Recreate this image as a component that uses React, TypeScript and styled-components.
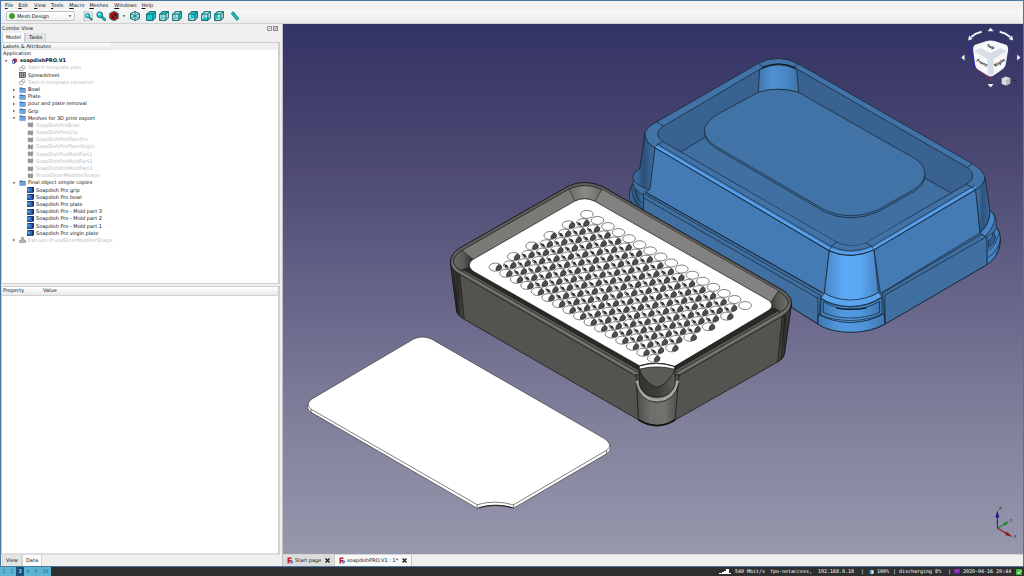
import React from "react";
import styled, { createGlobalStyle, css } from "styled-components";

const GlobalStyle = createGlobalStyle`
  *, *::before, *::after { box-sizing: border-box; }
  html, body, #root { height: 100%; margin: 0; }
  body {
    font: 5px/7px "DejaVu Sans", Verdana, sans-serif;
    color: #111;
    background: #efefef;
    overflow: hidden;
  }
  button, select, table { font: inherit; color: inherit; }
  button { border: 0; padding: 0; margin: 0; background: none; cursor: pointer; }
  ul { list-style: none; margin: 0; padding: 0; }
  svg { display: block; }
`;

const Desktop = styled.div`
  display: flex;
  flex-direction: column;
  height: 100vh;
`;

const AppWindow = styled.div`
  flex: 1;
  min-height: 0;
  display: flex;
  flex-direction: column;
  border: 1px solid #4a779f;
  background: #efefef;
`;

const MenuBar = styled.nav`
  display: flex;
  gap: 5px;
  height: 8px;
  padding-left: 4px;
  background: #f1f1f1;
`;

const MenuButton = styled.button`
  line-height: 8px;
  padding-right: 1px;
  margin-right: -1px;
  &:nth-child(even) { margin-right: 0; }
  &::first-letter { text-decoration: underline; }
`;

const ToolBar = styled.div`
  display: flex;
  align-items: center;
  gap: 3px;
  height: 15px;
  padding-left: 5px;
  background: linear-gradient(#f7f7f7, #ededed);
  border-bottom: 1px solid #d0d0d0;
`;

const WorkbenchPicker = styled.label`
  display: flex;
  align-items: center;
  gap: 2px;
  width: 69px;
  height: 10px;
  margin-right: 5px;
  padding: 0 2px;
  border: 1px solid #c4c4c4;
  border-radius: 2px;
  background: linear-gradient(#ffffff, #f0f0f0);
`;

const WorkbenchSelect = styled.select`
  flex: 1;
  min-width: 0;
  height: 8px;
  padding: 0;
  border: 0;
  appearance: none;
  background: none;
  line-height: 8px;
`;

const ToolButton = styled.button<{ $gap?: number }>`
  width: 10px;
  height: 10px;
  margin-left: ${(p) => p.$gap ?? 0}px;
`;

const ArrowButton = styled.button`
  width: 4px;
  height: 10px;
  display: grid;
  place-items: center;
`;

const Workspace = styled.div`
  flex: 1;
  min-height: 0;
  display: flex;
`;

const Sidebar = styled.aside`
  flex: 0 0 281px;
  display: flex;
  flex-direction: column;
  padding-right: 2px;
`;

const DockTitle = styled.header`
  display: flex;
  align-items: center;
  height: 9px;
  padding: 0 1px;
  line-height: 9px;
`;

const DockName = styled.span`
  flex: 1;
`;

const DockButton = styled.button`
  width: 6px;
  height: 6px;
`;

const TabStrip = styled.div<{ $bottom?: boolean }>`
  display: flex;
  height: ${(p) => (p.$bottom ? 11 : 9)}px;
  padding-left: 1px;
`;

const PanelTab = styled.button<{ $active?: boolean }>`
  padding: 0 3px;
  min-width: 20px;
  line-height: 9px;
  border: 1px solid #d2d2d2;
  border-width: 0 1px;
  background: ${(p) => (p.$active ? "#fcfcfc" : "#e4e4e4")};
`;

const TreePanel = styled.section`
  flex: 0 0 auto;
  height: 242px;
  border: 1px solid #cfcfcf;
  border-right-width: 2px;
  background: #fff;
`;

const TreeHeader = styled.div`
  height: 7px;
  padding-right: 168px;
  line-height: 7px;
  background: #efefef;
`;

const TreeHeading = styled.div`
  padding-left: 1px;
  background: linear-gradient(#fff, #e6e6e6);
`;

const Tree = styled.ul`
  display: grid;
  grid-auto-rows: 1fr;
  height: 194px;
`;

const TreeRow = styled.li<{ $depth: number; $dim?: boolean; $bold?: boolean }>`
  display: flex;
  align-items: center;
  min-height: 0;
  gap: 2px;
  padding-left: ${(p) => [1, 2, 10, 18][p.$depth]}px;
  white-space: nowrap;
  color: ${(p) => (p.$dim ? "#bcbcbc" : "#111")};
  ${(p) => p.$bold && css`font-weight: bold;`}
`;

const IconSlot = styled.span<{ $w: number }>`
  display: grid;
  place-items: center;
  width: ${(p) => p.$w}px;
`;

const Splitter = styled.div`
  height: 2px;
`;

const PropertyPanel = styled.section`
  flex: 1;
  min-height: 0;
  border: 1px solid #cfcfcf;
  border-right-width: 2px;
  border-bottom: 2px solid #dcdcdc;
  background: #fff;
`;

const PropertyTable = styled.table`
  width: 100%;
  border-collapse: collapse;
  table-layout: fixed;
  background: linear-gradient(#fff, #e9e9e9);
  border-bottom: 1px solid #d2d2d2;
`;

const PropertyHead = styled.th<{ $w?: number }>`
  width: ${(p) => (p.$w ? p.$w + "px" : "auto")};
  height: 8px;
  padding: 0 1px;
  line-height: 7px;
  font-weight: normal;
  text-align: left;
`;

const ViewArea = styled.main`
  flex: 1;
  min-width: 0;
  display: flex;
  flex-direction: column;
  border-left: 1px solid #bfbfc6;
`;

const Viewport = styled.div`
  flex: 1;
  min-height: 0;
  background: linear-gradient(#333366 0%, #3e3d6a 12%, #4d4973 27%, #67668a 52%, #82819b 76%, #9797ad 100%);
`;

const Scene = styled.svg`
  width: 100%;
  height: 100%;
`;

const DocumentTabs = styled.div`
  display: flex;
  height: 12px;
  border-top: 1px solid #d6d6d6;
`;

const DocumentTab = styled.div<{ $active?: boolean; $w: number }>`
  display: flex;
  align-items: center;
  gap: 2px;
  width: ${(p) => p.$w}px;
  padding: 0 4px;
  border-right: 1px solid #c8c8c8;
  background: ${(p) => (p.$active ? "#f8f8f8" : "#dcdcdc")};
`;

const DocumentName = styled.button`
  flex: 1;
  text-align: left;
  white-space: nowrap;
`;

const CloseButton = styled.button`
  width: 5px;
  height: 5px;
`;

const StatusBar = styled.footer`
  display: flex;
  justify-content: space-between;
  height: 9px;
  padding-right: 1px;
  background: #2f2f2f;
  color: #fff;
  font-family: "DejaVu Sans Mono", "Liberation Mono", monospace;
  line-height: 9px;
`;

const Desktops = styled.div`
  display: flex;
  background: #5cb3d3;
  color: #25718f;
`;

const DesktopButton = styled.button<{ $active?: boolean; $wide?: boolean }>`
  width: ${(p) => (p.$wide ? 11 : 8)}px;
  ${(p) => p.$active && css`background: #1c4f7c; color: #fff;`}
`;

const StatusItems = styled.div`
  display: flex;
  align-items: center;
`;

const StatusItem = styled.span<{ $w: number }>`
  width: ${(p) => p.$w}px;
  white-space: nowrap;
`;

/* ---------- small icons ---------- */

const TreeArrow = ({ open }: { open: boolean }) => (
  <svg width="4" height="4" viewBox="0 0 4 4">
    <path d={open ? "M.5 1.200h3L2 3z" : "M1.200 .5v3L3 2z"} fill="#555" />
  </svg>
);

type Kind = "doc" | "sketch" | "sheet" | "folder" | "mesh" | "solid" | "extrude";

const TreeIcon = ({ kind }: { kind: Kind }) => (
  <svg width="7" height="6" viewBox="0 0 14 12">
    {kind === "doc" && (
      <>
        <path d="M2 4l4-3 5 1v6l-5 4-4-2z" fill="#27489b" />
        <path d="M7 1l5 1v5l-5 1z" fill="#d8222a" />
        <path d="M3 5l3 1v4l-3-1z" fill="#cfdcf5" />
      </>
    )}
    {kind === "sketch" && (
      <path d="M1 5h7v6H1zM5 5V2l4-1 3 2v4H8" fill="#f8f8f8" stroke="#a5a5a5" strokeWidth="1.4" />
    )}
    {kind === "sheet" && (
      <>
        <rect x="1" y="1" width="12" height="10" fill="#c8c8c8" stroke="#333" strokeWidth="1.3" />
        <path d="M1 4h12M1 7.5h12M5 1v10M9 1v10" stroke="#444" strokeWidth="1.1" />
      </>
    )}
    {kind === "folder" && (
      <>
        <path d="M1 1h5l1 1h6v9H1z" fill="#4474ae" />
        <path d="M2 4h11v7H2z" fill="#6fa3dc" />
      </>
    )}
    {kind === "mesh" && (
      <path d="M2 3l3-2 2 2 4-2 1 5-2 5-3-3-4 2z M4 2l1 8M8 3l1 7" fill="#a0a0a0" stroke="#7b7b7b" strokeWidth="1" />
    )}
    {kind === "solid" && (
      <>
        <path d="M0 1l3-1h11v10l-3 2H0z" fill="#143a78" />
        <path d="M0 2h10v9H0z" fill="#2e69b8" />
        <path d="M1 3h5v4H1z" fill="#5e9be0" />
      </>
    )}
    {kind === "extrude" && (
      <path d="M5 1h4v5h4v5H1V7h4z" fill="#b5b5b5" stroke="#838383" strokeWidth="1.2" />
    )}
  </svg>
);

const INK = "#0c5a60";
const TEAL = "#19d0d6";

const Magnifier = () => (
  <>
    <path d="M9 9l5 5" stroke={INK} strokeWidth="4" strokeLinecap="round" />
    <path d="M9 9l5 5" stroke={TEAL} strokeWidth="2" strokeLinecap="round" />
    <circle cx="6" cy="6" r="4.6" fill={TEAL} stroke={INK} strokeWidth="1.4" />
    <circle cx="5" cy="5" r="1.8" fill="#b7f6f7" />
  </>
);

const CubeIcon = ({ face }: { face: string }) => (
  <>
    <path d="M1 5l4-4h10v10l-4 4H1z" fill="#b4ecee" />
    {face === "front" && <path d="M1 5l4-4h10v10l-4 4H1z" fill={TEAL} />}
    {face === "top" && <path d="M1 5l4-4h10l-4 4z" fill={TEAL} />}
    {face === "right" && <path d="M11 5l4-4v10l-4 4z" fill={TEAL} />}
    {face === "rear" && <path d="M5 1h10v10H5z" fill={TEAL} />}
    {face === "bottom" && <path d="M1 15l4-4h10l-4 4z" fill={TEAL} />}
    {face === "left" && <path d="M1 5l4-4v10l-4 4z" fill={TEAL} />}
    <path d="M1 5l4-4h10v10l-4 4H1zM1 5h10v10M11 5l4-4" fill="none" stroke={INK} strokeWidth="1.5" strokeLinejoin="round" />
    {face !== "front" && <path d="M5 1v10h10M5 11l-4 4" fill="none" stroke="#1b9ba0" strokeWidth="1.2" />}
  </>
);

const ToolIcon = ({ name }: { name: string }) => (
  <svg width="10" height="10" viewBox="0 0 16 16">
    {name === "fit" && (
      <>
        <path d="M2 0h10l3 3v13H2z" fill="#e6ecec" stroke="#8f9b9b" />
        <g transform="translate(3 3) scale(.75)"><Magnifier /></g>
      </>
    )}
    {name === "zoom" && <Magnifier />}
    {name === "style" && (
      <>
        <path d="M8 0l7 4v8l-7 4-7-4V4z" fill="#167a7c" stroke={INK} />
        <circle cx="8" cy="8" r="5.4" fill="#3a1210" stroke="#c9141b" strokeWidth="2" />
        <path d="M4 4l8 8" stroke="#c9141b" strokeWidth="2" />
      </>
    )}
    {name === "iso" && (
      <>
        <path d="M8 1l7 3v8l-7 3-7-3V4z" fill="#b4ecee" stroke={INK} strokeWidth="1.5" />
        <path d="M1 4l7 4 7-4M8 1v14M1 12l7-4 7 4" fill="none" stroke="#167d82" strokeWidth="1.5" />
      </>
    )}
    {name === "measure" && (
      <>
        <path d="M2 4l3-3 9 11-3 3z" fill={TEAL} stroke="#0b7378" strokeWidth="1.4" />
        <path d="M6 3l-1 2M8 6L7 7M10 8L9 9M12 10l-1 2" stroke="#0b7378" strokeWidth="1" />
      </>
    )}
    {["front", "top", "right", "rear", "bottom", "left"].includes(name) && <CubeIcon face={name} />}
  </svg>
);

const DocIcon = () => (
  <svg width="6" height="7" viewBox="0 0 12 14">
    <path d="M1 1h8v3H4v2h4v3H4v4H1z" fill="#d2161e" />
    <circle cx="8.500" cy="9.500" r="2.500" fill="#9db9ea" stroke="#2c4f9e" strokeWidth="1.800" />
  </svg>
);

const Cross = () => (
  <svg width="5" height="5" viewBox="0 0 10 10">
    <path d="M1 1l8 8M9 1L1 9" stroke="#111" strokeWidth="2.400" />
  </svg>
);

/* ---------- 3D scene ---------- */

const EDGE = "#16202b";

const BlueMold = () => (
  <g stroke={EDGE} strokeWidth=".7" strokeLinejoin="round" fill="none">
    {/* skirt and silhouette */}
    <path d="M645 133 L640 168 Q633 174 633 183 Q629 188 629.500 196 Q631 204 640 211 L817 323.300 Q828 331 850 331.700 Q874 331 885 323.300 L986.700 264 Q999 256 1000 240 Q1000 232 995.500 226 Q997 214 989 210 L984 177 Z" fill="#4070a2" />
    <path d="M633.500 184 Q634 190 644 195 L644 212 Q630 205 629.500 196 Q629.500 188 633.500 184 Z" fill="url(#blueCorner)" />
    <path d="M632 187 Q631 200 643 208 M635 189 Q636 199 643 203" />
    {/* left round corner and two front faces */}
    <path d="M645 133 Q645 143 655 147 L650.500 190 Q633 184 633 177 Q634 171 640 168 Z" fill="url(#blueCorner)" />
    <path d="M655 147 L829 250 L824 293 L645 191.500 L650 189 Z" fill="#457bb4" />
    <path d="M873.500 249 L975 188.500 L979.500 232.500 L880 293 Z" fill="#457bb4" />
    <path d="M975 188.500 Q984 184 984.300 177 L989.500 212 Q988 225 979.500 232.500 Z" fill="url(#blueCornerR)" />
    <path d="M989.500 210 Q996 216 993.500 222 Q990 231 984 236 L979.500 232.500 Q989 224 989.500 212 Z" fill="#4a87c8" />
    {/* lower skirt */}
    <path d="M643.500 193 L820.500 295 L818 323.500 L643.500 214 Z" fill="#4070a2" />
    <path d="M645 191.500 L821 292 M643.500 197.500 L818 298" />
    <path d="M882 292.500 L981 234 L986.500 237 L986.500 264 L885 323.300 Z" fill="#4070a2" />
    <path d="M884.500 294.500 L985.500 236.500 M884.500 294.500 V323.300" />
    <path d="M986.500 237 Q994 232 996 228 Q1000 232 999.500 242 Q997 258 986.500 264 Z" fill="#4682c2" />
    <path d="M987.500 250 Q995 246 998 234 M987.500 257 Q997 251 999.500 240" />
    <path d="M988 240 Q992 237 993 232 L995 238 Q993 244 988 247 Z" fill="#2f5f92" />
    {/* front round corner */}
    <path d="M829 250 Q850 260 873.500 249 L878 292 Q866 300 850 300 Q834 300 824 292.500 Z" fill="url(#blueFront)" />
    <path d="M824 292.500 Q834 299 850 299.500 Q867 299 878 292 L881.500 296 Q869 305.500 850 306 Q832 305.500 820.500 297.500 Z" fill="#5aa5f0" />
    <path d="M820.500 298 Q832 306 850 306.500 Q869 306 881.500 297 L881.500 314 Q868 322 850 322 Q831 322 820.500 315 Z" fill="url(#blueFront2)" />
    <path d="M823 301 Q835 308.500 850 308.500 Q867 308.500 879 301 V312 Q866 317.500 850 317.500 Q835 317.500 823 312 Z" fill="url(#blueFront2)" />
    <path d="M836 307.600 Q850 310 866 307.600" strokeWidth="1.400" />
    <path d="M818 313.500 Q833 322 850 322 Q870 321.500 883.500 313 L884.500 323.300 Q870 331.700 850 331.700 Q828 331 817.500 323.500 Z" fill="url(#blueFront2)" />
    <path d="M819 314.500 Q832 319.500 850 320 Q870 319.500 883 313 M817.500 296 V323.500" />
    {/* rim */}
    <path d="M656.700 121.700 L758.300 63.300 Q778.300 53 798.300 64 L971.700 163.300 Q984 171 984.300 178 Q983 185 975 189.500 L873.500 249.500 Q850 260 829 250.500 L655 147.500 Q645 142 645 133.500 Q646 127 656.700 121.700 Z" fill="#4173a8" />
    <path d="M655 145.500 L829 248 Q850 258 873.500 247.500 L975 187" stroke="#56a2f0" strokeWidth="2.400" />
    <path d="M655 147.500 L829 250.500 Q850 260 873.500 249.500 L975 189.500 M657 143.500 L830 245.500 Q850 255 872 245.500 L974 185" strokeWidth=".5" />
    {/* cavity */}
    <path d="M663.300 126 L760 69 Q778.300 59.500 797 69 L966.700 167.300 Q972 171 972 175.500 Q971.500 181 965.700 184 L865 242.300 Q850 248 836.700 241.700 L663.300 141.500 Q657.500 138 657.500 133.500 Q658 129 663.300 126 Z" fill="#396290" />
    <path d="M681.700 151.500 L705 137 L721 112.500 L758.300 92 Q778.300 86 798.300 92.300 L913.300 157.700 Q925 165 924.500 178 L950 192.300 L865 242.300 Q850 248 836.700 241.700 Z" fill="#4070a2" stroke="none" />
    <path d="M759.500 69.500 Q778 60 796.500 69.500 L798.500 92.500 Q778.300 86 758 92.500 Z" fill="url(#blueBack)" />
    <path d="M681.700 151 L705 137 M924.500 178 L950 192.300" />
    <path d="M720 112.700 L758.300 92 Q778.300 86 798.300 92.300 L913.300 157.700 Q924 164 924.500 173.300 Q924 183 913.300 189.300 L876.700 210 Q850 221 825 210 L716.700 146.700 Q704 139 704.300 130 Q705 121 720 112.700 Z" fill="#4173a6" />
    <path d="M704.500 132 Q704.500 141 716.700 148.700 L825 212 Q850 223 876.700 212 L913.300 191.300 Q924 185 924.500 175" />
    {/* seams across the rim */}
    <path d="M656.700 121.700 L663.300 126 M758.300 63.300 L763 67 M798.300 64 L794 67 M971.700 163.300 L966.700 167.300 M965.700 184 L975 189 M865 242.300 Q871 244 873.500 249 M836.700 241.700 Q831 244 829 250 M663.300 141.500 Q657 143 655 147.500" />
    <path d="M762 67.500 Q778 60.500 795 67.500" strokeWidth="1.400" />
  </g>
);

const holes = (() => {
  const list: { x: number; y: number; blob: boolean; wedge: boolean }[] = [];
  for (let r = 0; r <= 10; r++) {
    const odd = r % 2 === 1;
    const count = odd ? 15 : 16;
    for (let c = 0; c < count; c++) {
      const j = c + (odd ? 0.5 : 0);
      list.push({
        x: 587 - 9.13 * r + 10.53 * j,
        y: 214 + 5.27 * r + 6.07 * j,
        blob: r > 0,
        wedge: r > 0 && r < 10 && (odd || c > 0) && c < 15,
      });
    }
  }
  return list;
})();

const Bowl = () => (
  <g stroke="#131313" strokeWidth=".7" strokeLinejoin="round" fill="none">
    <path d="M460 247.700 L568.300 186 Q585 178 603.300 186.700 L780 288.300 Q791 294 791.300 303 L784 354 Q783 358 778 361 L675 419.300 Q656.700 430.500 638.300 419 L465 319 Q457 314 457 310 L450.700 262 Q451 253 460 247.700 Z" fill="#54534f" />
    <path d="M450.700 262 Q451 269 460 274 L464.500 318.500 Q457 314 457 310 Z" fill="url(#greyLeft)" />
    <path d="M791.300 303 Q790 311 782 315.700 L777.500 361 Q783 358 784 354 Z" fill="url(#greyRight)" />
    <path d="M453 268 L459 314 M785 313 L781 358" strokeWidth=".5" />
    <path d="M460 247.700 L568.300 186 Q585 178 603.300 186.700 L780 288.300 Q791 294 791.300 303 Q790 311 782 315.700 L677 376 L637 376 L460 274 Q451 269 450.700 262 Q451 253 460 247.700 Z" fill="#5f5e5b" />
    <path d="M453 262 Q453 268 461 272 L637 373.500 M677 373.500 L781 313.500 Q788 309 789 303" stroke="#7c7b78" strokeWidth="1.300" />
    <path d="M462.500 249.800 L569 188.800 Q585 181.500 602 189.300 L778 290.500 Q788 297 788 303 Q787 308 780 311.500 L677 371 L637 371 L461.500 270 Q454 266 454 261.500 Q454 255 462.500 249.800 Z" fill="#7b7a77" />
    <path d="M602 189.300 L778 290.500 L770 300 L595 201 Z" fill="#838280" stroke="none" />
    <path d="M569 188.800 Q585 181.500 602 189.300 L595 201 Q585 196 575 200.700 Z" fill="url(#greyBack)" strokeWidth=".5" />
    <path d="M462.500 249.800 L473.500 259 Q466 264 472 272 L461.500 270 Q454 266 454 261.500 Q454 255 462.500 249.800 Z" fill="url(#greyLeft2)" strokeWidth=".5" />
    <path d="M778 290.500 Q788 297 788 303 Q787 308 780 311.500 L768 311 Q774 306 770.700 301.700 Z" fill="url(#greyRight2)" strokeWidth=".5" />
    <path d="M462 269 L470 266 L640 362 H674 L771 306 L780 310 L677 369.500 H637 Z" fill="#2a2926" stroke="none" />
    <path d="M464 270.500 L638 370 M676 370 L778 311.500" stroke="#5e5d5a" strokeWidth="1" />
    {/* perforated plate */}
    <path d="M473.300 259 L575 200.700 Q585 196 595 201 L768 299.500 Q775 304.500 769 309.500 L674.500 365.700 Q656.700 359.500 639.300 365 L473 270.500 Q466 264.500 473.300 259 Z" fill="#fff" />
    <g stroke="#2d2d2d" strokeWidth=".6">
      {holes.map((h, i) => (
        <g key={i}>
          <ellipse cx={h.x} cy={h.y} rx="6.300" ry="4" fill="#fff" />
          {h.blob && (
            <path
              d={`M${h.x + 0.4} ${h.y + 3} Q${h.x + 0.2} ${h.y - 0.8} ${h.x + 3.8} ${h.y - 2.8} Q${h.x + 6.8} ${h.y - 1} ${h.x + 6} ${h.y + 1.8} Q${h.x + 4} ${h.y + 4} ${h.x + 0.4} ${h.y + 3} Z`}
              fill="#4d4d4c"
            />
          )}
          {h.wedge && (
            <path
              d={`M${h.x - 6} ${h.y - 0.8} L${h.x - 2.8} ${h.y + 0.2} L${h.x - 1} ${h.y + 3.2} L${h.x - 4.4} ${h.y + 2.4} Z`}
              fill="#2a2a2a"
              stroke="none"
            />
          )}
        </g>
      ))}
    </g>
    {/* pouring spout */}
    <path d="M636 374 L638.500 419 Q656.700 430.500 675 419.300 L679 374 Z" fill="url(#spout)" />
    <path d="M638.500 419 Q656.700 430.500 675 419.300" strokeWidth="1.600" />
    <path d="M637 380 Q640 399 656.700 399.500 Q674 399 677.500 380" stroke="#a6a497" strokeWidth="3.200" />
    <path d="M635.700 382 Q640 401 656.700 401.500 Q675 401 679 382" />
    <path d="M639.300 367 V384 Q643 396 657 396.500 Q671 396 675 384 V367 Q656.700 362 639.300 367 Z" fill="url(#spoutInner)" />
    <path d="M639.500 368 Q656.700 364 675 368 L673 373 Q664 386 657 386.500 Q650 386 641 373 Z" fill="#5b5a56" />
    <path d="M639.300 365.500 Q656.700 360 674.500 366 V368.500 Q656.700 364 639.300 368.500 Z" fill="#fff" />
  </g>
);

const BlankPlate = () => (
  <g stroke="#2a2a2a" strokeWidth=".6" strokeLinejoin="round">
    <path d="M308.300 403.500 V407 Q308.500 409.500 311.700 411.500 L477.500 507.300 H479 Q495.700 502 513.700 507.300 L606.700 453 Q610.500 450.500 610.300 447 V444 Z" fill="#fff" />
    <path d="M479 506.700 Q495.700 501.800 513 506.700" fill="none" stroke="#111" strokeWidth=".9" />
    <path d="M313.500 397.700 L414 338.500 Q422.700 334.500 431.700 338.300 L604 437.500 Q614 444 606.700 449.500 L513.700 504 Q495.700 498.500 477.500 503.800 L311.700 408.500 Q305 403 313.500 397.700 Z" fill="#fff" />
    <path d="M311.700 408.500 v3 M606.700 449.500 v3.500 M477.500 503.800 v3.500 M513.700 504 v3.300" />
  </g>
);

const NavigationCube = () => (
  <g>
    <g fill="#eef3f8">
      <path d="M987 31.200 L990 27.800 L993 31.200 Z M987 84 H993 L990 87.500 Z M964 54.500 V60.500 L960.700 57.500 Z M1016.500 54.500 V60.500 L1019.800 57.500 Z" />
      <path d="M967.500 40.500 L968.500 35.500 L972 39 Z M1012.500 40.500 L1011.500 35.500 L1008 39 Z" />
    </g>
    <path d="M970.500 37 Q975 33 981 31.800 M1009.500 37 Q1005 33 999 31.800" fill="none" stroke="#eef3f8" strokeWidth="2" />
    <path d="M975 67 L992 81" fill="none" stroke="#c01f35" strokeWidth=".8" />
    <path d="M970.500 43 V52 L975 67" fill="none" stroke="#2323d8" strokeWidth="1" />
    <path d="M974 45 L986 41 Q990 40 994 41 L1006 45 Q1008 47 1007.500 50 L1005 65 Q1004 68 1001 70 L993 75.500 Q990 77.500 987 75.500 L978 70 Q975 68 974.500 65 L972.500 50 Q972 47 974 45 Z" fill="#f4f5f7" />
    <path d="M974 51 L983 47 L990 52 L997 47 L1006 51 L993 59 V75 H987 V59 Z" fill="#ccd6e2" opacity=".75" />
    <path d="M978 47 L990 41.500 L1002 47 L990 53 Z M975 54 L986 60 V72 L977 67 Z M1005 54 L994 60 V72 L1003 67 Z" fill="#fafafa" />
    <g fill="#2b2b2b" fontFamily="DejaVu Sans, sans-serif" fontSize="4" fontWeight="bold" textAnchor="middle">
      <text x="990" y="48" transform="rotate(20 990 47)">Top</text>
      <text x="981" y="64" transform="rotate(30 981 63)">Front</text>
      <text x="999" y="64" transform="rotate(-30 999 63)">Right</text>
    </g>
    <path d="M1001 78.500 L1005 76.500 L1009.500 78 V83.500 L1005.500 85.500 L1001 84 Z" fill="#dcdcdc" />
    <path d="M1005.500 80 L1009.500 78 V83.500 L1005.500 85.500 Z" fill="#b9b9b9" />
    <path d="M1013 80.500 h3" stroke="#1c2244" strokeWidth="1.200" />
  </g>
);

const AxisCross = () => (
  <g>
    <path d="M996.700 527.300 V514" stroke="#1b1b8e" strokeWidth="1" />
    <path d="M994.700 516.500 L996.700 509.500 L998.700 516.500 Z" fill="#1b1b8e" />
    <path d="M996.700 527.300 L1004 523" stroke="#1c7a1f" strokeWidth="1" />
    <path d="M1002.500 522 L1008.500 520 L1004.500 525 Z" fill="#1c8a1f" />
    <path d="M996.700 527.300 L1006 532.500" stroke="#8e1b1b" strokeWidth="1" />
    <path d="M1006 530.500 L1012 536 L1004.500 534 Z" fill="#8e1b1b" />
    <g fill="#20202a" fontFamily="DejaVu Sans, sans-serif" fontSize="4">
      <text x="998" y="509">Z</text>
      <text x="1009" y="521">Y</text>
      <text x="1013" y="537">X</text>
    </g>
  </g>
);

const Stops = ({ id, colors }: { id: string; colors: string[] }) => (
  <linearGradient id={id}>
    {colors.map((c, i) => (
      <stop key={i} offset={i / (colors.length - 1)} stopColor={c} />
    ))}
  </linearGradient>
);

const Model = () => (
  <Scene viewBox="283 24 740 529" preserveAspectRatio="xMidYMid slice" role="img" aria-label="Soap dish model">
    <defs>
      <Stops id="blueCorner" colors={["#3f73a8", "#2c5078", "#3f70a4"]} />
      <Stops id="blueCornerR" colors={["#4378b0", "#2d547f", "#3c6b9d"]} />
      <Stops id="blueFront" colors={["#4a86c6", "#5ba8f4", "#5ba8f4", "#4882c0"]} />
      <Stops id="blueFront2" colors={["#4178b2", "#5299e0", "#4f95da", "#4178b2"]} />
      <Stops id="blueBack" colors={["#3f76ae", "#4e90d2", "#4a89c8", "#3d70a5"]} />
      <Stops id="greyLeft" colors={["#454441", "#2a2927", "#4c4b48"]} />
      <Stops id="greyRight" colors={["#4c4b48", "#2f2e2c", "#454441"]} />
      <Stops id="greyLeft2" colors={["#6c6b68", "#5b5a57", "#2c2b29"]} />
      <Stops id="greyRight2" colors={["#353432", "#5a5956", "#6f6e6b"]} />
      <Stops id="greyBack" colors={["#6b6a67", "#8b8a87", "#6b6a67"]} />
      <Stops id="spout" colors={["#4b4a47", "#6f6e6a", "#73726e", "#4b4a47"]} />
      <Stops id="spoutInner" colors={["#33322f", "#3e3d3a", "#5d5c59"]} />
    </defs>
    <BlueMold />
    <Bowl />
    <BlankPlate />
    <NavigationCube />
    <AxisCross />
  </Scene>
);

/* ---------- data ---------- */

type Node = { name: string; depth: number; kind?: Kind; open?: boolean; dim?: boolean; bold?: boolean };

const nodes: Node[] = [
  { name: "Application", depth: 0 },
  { name: "soapdishPRO.V1", depth: 1, kind: "doc", open: true, bold: true },
  { name: "Sketch template plan", depth: 2, kind: "sketch", dim: true },
  { name: "Spreadsheet", depth: 2, kind: "sheet" },
  { name: "Sketch template elevation", depth: 2, kind: "sketch", dim: true },
  ...["Bowl", "Plate", "pour and plate removal", "Grip"].map(
    (name): Node => ({ name, depth: 2, kind: "folder", open: false })
  ),
  { name: "Meshes for 3D print export", depth: 2, kind: "folder", open: true },
  ...[
    "SoapDishProBowl",
    "SoapDishProGrip",
    "SoapDishProPlatePro",
    "SoapDishProPlateVirgin",
    "SoapDishProMoldPart1",
    "SoapDishProMoldPart2",
    "SoapDishProMoldPart3",
    "PrusaSlicerModifierShape",
  ].map((name): Node => ({ name, depth: 3, kind: "mesh", dim: true })),
  { name: "Final object simple copies", depth: 2, kind: "folder", open: true },
  ...[
    "Soapdish Pro grip",
    "Soapdish Pro bowl",
    "Soapdish Pro plate",
    "Soapdish Pro - Mold part 3",
    "Soapdish Pro - Mold part 2",
    "Soapdish Pro - Mold part 1",
    "Soapdish Pro virgin plate",
  ].map((name): Node => ({ name, depth: 3, kind: "solid" })),
  { name: "Extrude PrusaSlicerModifierShape", depth: 2, kind: "extrude", open: false, dim: true },
];

const menus = ["File", "Edit", "View", "Tools", "Macro", "Meshes", "Windows", "Help"];

export default function App() {
  return (
    <Desktop>
      <GlobalStyle />
      <AppWindow>
        <MenuBar>
          {menus.map((m) => (
            <MenuButton key={m}>{m}</MenuButton>
          ))}
        </MenuBar>
        <ToolBar>
          <WorkbenchPicker>
            <svg width="6" height="6" viewBox="0 0 6 6">
              <circle cx="3" cy="3" r="2.500" fill="#3ea51c" stroke="#23600f" strokeWidth=".7" />
            </svg>
            <WorkbenchSelect aria-label="Workbench" defaultValue="Mesh Design">
              <option>Mesh Design</option>
            </WorkbenchSelect>
            <TreeArrow open />
          </WorkbenchPicker>
          <ToolButton aria-label="Fit all"><ToolIcon name="fit" /></ToolButton>
          <ToolButton aria-label="Fit selection"><ToolIcon name="zoom" /></ToolButton>
          <ToolButton aria-label="Draw style"><ToolIcon name="style" /></ToolButton>
          <ArrowButton aria-label="Draw style options"><TreeArrow open /></ArrowButton>
          <ToolButton $gap={1} aria-label="Isometric"><ToolIcon name="iso" /></ToolButton>
          <ToolButton $gap={3} aria-label="Front"><ToolIcon name="front" /></ToolButton>
          <ToolButton aria-label="Top"><ToolIcon name="top" /></ToolButton>
          <ToolButton aria-label="Right"><ToolIcon name="right" /></ToolButton>
          <ToolButton $gap={3} aria-label="Rear"><ToolIcon name="rear" /></ToolButton>
          <ToolButton aria-label="Bottom"><ToolIcon name="bottom" /></ToolButton>
          <ToolButton aria-label="Left"><ToolIcon name="left" /></ToolButton>
          <ToolButton $gap={3} aria-label="Measure distance"><ToolIcon name="measure" /></ToolButton>
        </ToolBar>
        <Workspace>
          <Sidebar>
            <DockTitle>
              <DockName>Combo View</DockName>
              <DockButton aria-label="Float">
                <svg width="5" height="5" viewBox="0 0 10 10"><path d="M1 1h8v8H1zM3 7l4-4" fill="none" stroke="#777" strokeWidth="1.500" /></svg>
              </DockButton>
              <DockButton aria-label="Close">
                <svg width="5" height="5" viewBox="0 0 10 10"><path d="M1 1h8v8H1zM3 7l4-4M3 3l4 4" fill="none" stroke="#666" strokeWidth="1.500" /></svg>
              </DockButton>
            </DockTitle>
            <TabStrip>
              <PanelTab $active>Model</PanelTab>
              <PanelTab>Tasks</PanelTab>
            </TabStrip>
            <TreePanel>
              <TreeHeader>
                <TreeHeading>Labels &amp; Attributes</TreeHeading>
              </TreeHeader>
              <Tree>
                {nodes.map((n) => (
                  <TreeRow key={n.name} $depth={n.depth} $dim={n.dim} $bold={n.bold}>
                    {n.depth > 0 && (
                      <IconSlot $w={4}>{n.open !== undefined && <TreeArrow open={n.open} />}</IconSlot>
                    )}
                    {n.kind && <IconSlot $w={8}><TreeIcon kind={n.kind} /></IconSlot>}
                    <span>{n.name}</span>
                  </TreeRow>
                ))}
              </Tree>
            </TreePanel>
            <Splitter />
            <PropertyPanel>
              <PropertyTable>
                <thead>
                  <tr>
                    <PropertyHead $w={40}>Property</PropertyHead>
                    <PropertyHead>Value</PropertyHead>
                  </tr>
                </thead>
              </PropertyTable>
            </PropertyPanel>
            <TabStrip $bottom>
              <PanelTab>View</PanelTab>
              <PanelTab $active>Data</PanelTab>
            </TabStrip>
          </Sidebar>
          <ViewArea>
            <Viewport>
              <Model />
            </Viewport>
            <DocumentTabs>
              <DocumentTab $w={52}>
                <DocIcon />
                <DocumentName>Start page</DocumentName>
                <CloseButton aria-label="Close Start page"><Cross /></CloseButton>
              </DocumentTab>
              <DocumentTab $w={77} $active>
                <DocIcon />
                <DocumentName>soapdishPRO.V1 : 1*</DocumentName>
                <CloseButton aria-label="Close soapdishPRO.V1"><Cross /></CloseButton>
              </DocumentTab>
            </DocumentTabs>
          </ViewArea>
        </Workspace>
      </AppWindow>
      <StatusBar>
        <Desktops>
          {["1", "2", "3", "4", "9", "10"].map((d) => (
            <DesktopButton key={d} $active={d === "3"} $wide={d === "10"}>{d}</DesktopButton>
          ))}
        </Desktops>
        <StatusItems>
          <StatusItem $w={16}>
            <svg width="13" height="5" viewBox="0 0 13 5"><path d="M0 5V4h3V3h2V2h2V0h3v4h2v1z" fill="#fff" /></svg>
          </StatusItem>
          <StatusItem $w={35}>540 Mbit/s</StatusItem>
          <StatusItem $w={48}>fpo-netaccess,</StatusItem>
          <StatusItem $w={43}>192.168.0.18</StatusItem>
          <StatusItem $w={8}>|</StatusItem>
          <StatusItem $w={8}>
            <svg width="5" height="6" viewBox="0 0 10 12"><circle cx="5" cy="6" r="4.500" fill="#2b9be8" /><path d="M5 1.500a4.500 4.500 0 0 1 0 9z" fill="#f0e7c4" /></svg>
          </StatusItem>
          <StatusItem $w={16}>100%</StatusItem>
          <StatusItem $w={6}>|</StatusItem>
          <StatusItem $w={49}>discharging 8%</StatusItem>
          <StatusItem $w={6}>|</StatusItem>
          <StatusItem $w={9}>
            <svg width="6" height="5" viewBox="0 0 12 10"><path d="M0 0h12v6l-3 4-2-2-3 2-4-3z" fill="#7a2cb8" /><path d="M1 3l4 2 5-3" stroke="#e0409a" strokeWidth="1.500" fill="none" /></svg>
          </StatusItem>
          <StatusItem $w={53}>2020-04-16 20:44</StatusItem>
          <StatusItem $w={7}>
            <svg width="6" height="6" viewBox="0 0 12 12"><rect width="12" height="12" rx="2" fill="#3fc13a" /><path d="M3 6l2.500 3L10 3" stroke="#fff" strokeWidth="2" fill="none" /></svg>
          </StatusItem>
        </StatusItems>
      </StatusBar>
    </Desktop>
  );
}
